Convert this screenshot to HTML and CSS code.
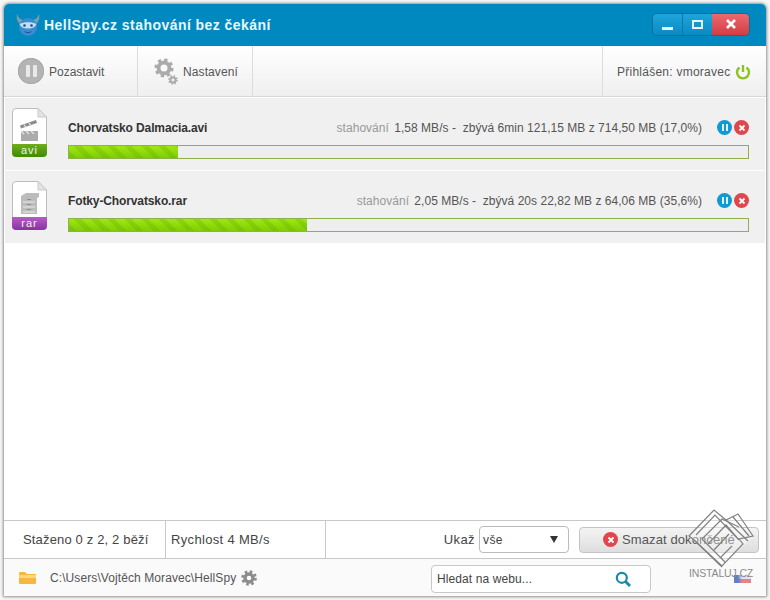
FILE: index.html
```html
<!DOCTYPE html>
<html lang="cs">
<head>
<meta charset="utf-8">
<title>HellSpy.cz stahování bez čekání</title>
<link rel="stylesheet" href="styles.css">
</head>
<body>
<div class="window">
  <header class="titlebar">
    <svg class="logo" viewBox="0 0 24 24" width="24" height="24">
      <path d="M1 1c-1 5 .5 9 4 10l3-4C5 7 2.500 5 1 1zM23 1c1 5-.5 9-4 10l-3-4c3 0 5.500-2 7-6z" fill="#7d9bb0"/>
      <circle cx="12" cy="14" r="9" fill="#3b8bd2"/>
      <path d="M3.500 11c4-2.500 13-2.500 17 0-1 3-4 4.500-8.500 4.500S4.500 14 3.500 11z" fill="#bfe0f6"/>
      <circle cx="8.500" cy="12.500" r="1.300" fill="#22507a"/>
      <circle cx="15.500" cy="12.500" r="1.300" fill="#22507a"/>
      <path d="M8 18c2 1.500 6 1.500 8 0-1 2.500-7 2.500-8 0z" fill="#174f87"/>
    </svg>
    <span class="title">HellSpy.cz stahování bez čekání</span>
    <div class="winbtns">
      <span class="wb wb-min"><i class="min-glyph"></i></span>
      <span class="wb wb-max"><i class="max-glyph"></i></span>
      <span class="wb wb-close">
        <svg viewBox="0 0 12 12" width="12" height="12"><path d="M2 2l8 8M10 2l-8 8" stroke="#fff" stroke-width="2.600"/></svg>
      </span>
    </div>
  </header>

  <nav class="toolbar">
    <div class="tool tool-pause">
      <span class="bigpause"><i></i><i></i></span>
      <span>Pozastavit</span>
    </div>
    <div class="tool tool-settings">
      <svg viewBox="0 0 24 27" width="24" height="27">
        <g fill="none" stroke="#ababab">
          <circle cx="10" cy="10" r="5.500" stroke-width="4"/>
          <circle cx="10" cy="10" r="8" stroke-width="3.200" stroke-dasharray="3.140 3.140"/>
          <circle cx="19" cy="22" r="2.500" stroke-width="2.200"/>
          <circle cx="19" cy="22" r="4" stroke-width="1.600" stroke-dasharray="1.570 1.570"/>
        </g>
      </svg>
      <span class="label-settings">Nastavení</span>
    </div>
    <div class="user">
      <span>Přihlášen: vmoravec</span>
      <svg viewBox="0 0 16 16" width="16" height="16"><path d="M4.500 3.500a6 6 0 1 0 7 0" fill="none" stroke="#8cc320" stroke-width="2.400"/><path d="M8 1v7" stroke="#8cc320" stroke-width="2.400"/></svg>
    </div>
  </nav>

  <main class="list">
    <article class="item">
      <div class="fileicon">
        <svg class="sheet" viewBox="0 0 35 37" width="35" height="37">
          <path d="M.5 37V4a3.500 3.500 0 0 1 3.500-3.500h22L34.500 9v28z" fill="#fff" stroke="#bdbdbd"/>
          <path d="M26 .5V9h8.500z" fill="#e4e4e4" stroke="#c8c8c8"/>
          <path d="M9 23h17v10H9z" fill="#ababab"/>
          <path d="M8 17.500l16-5.500 1 3-16 5.500z" fill="#8c8c8c"/>
          <path d="M12 16.500l2 3M17 14.800l2 3M9 23l3 3M14 23l3 3M19 23l3 3" stroke="#e6e6e6" stroke-width="1.200"/>
        </svg>
        <div class="ext ext-avi">avi</div>
      </div>
      <div class="body">
        <div class="meta">
          <strong class="name">Chorvatsko Dalmacia.avi</strong>
          <span class="status"><span class="state">stahování</span> 1,58 MB/s -&nbsp; zbývá 6min 121,15 MB z 714,50 MB (17,0%)</span>
          <span class="rowbtn rb-pause"><i></i><i></i></span>
          <span class="rowbtn rb-close"><svg viewBox="0 0 8 8" width="8" height="8"><path d="M1.500 1.500l5 5M6.500 1.500l-5 5" stroke="#fff" stroke-width="1.800"/></svg></span>
        </div>
        <div class="bar"><div class="fill fill-a"></div></div>
      </div>
    </article>
    <article class="item">
      <div class="fileicon">
        <svg class="sheet" viewBox="0 0 35 37" width="35" height="37">
          <path d="M.5 37V4a3.500 3.500 0 0 1 3.500-3.500h22L34.500 9v28z" fill="#fff" stroke="#bdbdbd"/>
          <path d="M26 .5V9h8.500z" fill="#e4e4e4" stroke="#c8c8c8"/>
          <path d="M9 15l5-3h13v4l-2 1v16H9z" fill="#bcbcbc"/>
          <path d="M11 21h12M11 26h12M11 31h12" stroke="#eaeaea" stroke-width="1.200"/>
          <path d="M15 18.500h4M15 23.500h4M15 28.500h4" stroke="#8e8e8e"/>
        </svg>
        <div class="ext ext-rar">rar</div>
      </div>
      <div class="body">
        <div class="meta">
          <strong class="name">Fotky-Chorvatsko.rar</strong>
          <span class="status"><span class="state">stahování</span> 2,05 MB/s -&nbsp; zbývá 20s 22,82 MB z 64,06 MB (35,6%)</span>
          <span class="rowbtn rb-pause"><i></i><i></i></span>
          <span class="rowbtn rb-close"><svg viewBox="0 0 8 8" width="8" height="8"><path d="M1.500 1.500l5 5M6.500 1.500l-5 5" stroke="#fff" stroke-width="1.800"/></svg></span>
        </div>
        <div class="bar"><div class="fill fill-b"></div></div>
      </div>
    </article>
  </main>

  <section class="statusbar">
    <div class="cell cell-count">Staženo 0 z 2, 2 běží</div>
    <div class="cell cell-speed">Rychlost 4 MB/s</div>
    <div class="controls">
      <label class="show">Ukaž</label>
      <div class="select"><span>vše</span><b class="caret"></b></div>
      <button class="clear">
        <span class="rowbtn rb-close"><svg viewBox="0 0 8 8" width="8" height="8"><path d="M1.500 1.500l5 5M6.500 1.500l-5 5" stroke="#fff" stroke-width="1.800"/></svg></span>
        Smazat dokončené
      </button>
    </div>
  </section>

  <footer class="footer">
    <svg class="folder" viewBox="0 0 17 13" width="17" height="13"><path d="M0 2a1 1 0 0 1 1-1h5l2 2h8a1 1 0 0 1 1 1v8a1 1 0 0 1-1 1H1a1 1 0 0 1-1-1z" fill="#f5b73d"/><path d="M0 4h17v3H0z" fill="#fbd67c"/></svg>
    <span class="path">C:\Users\Vojtěch Moravec\HellSpy</span>
    <svg class="pathgear" viewBox="0 0 16 16" width="16" height="16">
      <g fill="none" stroke="#8c8c8c">
        <circle cx="8" cy="8" r="4" stroke-width="3.400"/>
        <circle cx="8" cy="8" r="6.500" stroke-width="2.600" stroke-dasharray="2.550 2.550"/>
      </g>
    </svg>
    <div class="search">
      <span>Hledat na webu...</span>
      <svg viewBox="0 0 16 16" width="16" height="16"><circle cx="6.800" cy="6.800" r="5" fill="none" stroke="#1a87ad" stroke-width="2.200"/><path d="M10.500 10.500l4.500 4.500" stroke="#1a87ad" stroke-width="2.800"/></svg>
    </div>
  </footer>
</div>

<div class="watermark">
  <i class="flag"></i>
  <svg viewBox="0 0 66 62" width="66" height="62">
    <path d="M33 1l32 30-32 30L1 31z" fill="#fff" fill-opacity=".35"/>
    <g fill="none" stroke="#808080" stroke-width="1.200">
      <path d="M1 30L26 4l12 10L50 8l15 22-14 3 4 5-21 22L6 34z"/>
      <path d="M8 29L27 9l24 25M14 33L34 13l17 8M20 38L38 19l13 15M26 44l15-16M32 52l12-12"/>
      <path d="M6 34l28 27M14 33l23 23M38 14l22 21M45 11l16 19"/>
    </g>
  </svg>
  <span class="wm-text">INSTALUJ.CZ</span>
</div>
</body>
</html>
```
FILE: styles.css
```css
* { box-sizing: border-box; }
html, body { margin: 0; height: 100%; }
body {
  width: 770px;
  height: 600px;
  overflow: hidden;
  background: #f7f7f7;
  font-family: "Liberation Sans", Arial, sans-serif;
  font-size: 12px;
  color: #444;
  padding: 4px;
  position: relative;
}
.window {
  width: 762px;
  height: 592px;
  display: flex;
  flex-direction: column;
  background: #fff;
  border-radius: 5px 5px 0 0;
  box-shadow: 0 0 3px 1px #8f8f8f;
  overflow: hidden;
}

/* title bar */
.titlebar {
  height: 42px;
  flex: none;
  background: #0089bf;
  display: flex;
  align-items: center;
  padding: 0 17px 0 12px;
  color: #fff;
}
.logo { margin-right: 4px; }
.title {
  font-size: 14px;
  font-weight: bold;
  letter-spacing: 0.45px;
  color: #e8f6fc;
}
.winbtns {
  margin-left: auto;
  display: flex;
  height: 21px;
  margin-top: -2px;
  border-radius: 4px;
  overflow: hidden;
  box-shadow: 0 0 0 1px #0a6f9b;
}
.wb {
  display: flex;
  align-items: center;
  justify-content: center;
  height: 21px;
}
.wb-min { width: 30px; background: linear-gradient(#1ea4dc, #0a8ac2); border-right: 1px solid #0a78aa; }
.wb-max { width: 29px; background: linear-gradient(#1ea4dc, #0a8ac2); }
.wb-close { width: 37px; background: linear-gradient(#ea6a6f, #d33c43); }
.min-glyph { width: 11px; height: 3px; background: #e6f4fb; margin-top: 8px; }
.max-glyph { width: 11px; height: 9px; border: 2px solid #e6f4fb; }

/* toolbar */
.toolbar {
  height: 51px;
  flex: none;
  display: flex;
  align-items: stretch;
  background: linear-gradient(#ffffff, #efefef);
  border-bottom: 1px solid #d8d8d8;
  color: #555;
}
.tool {
  display: flex;
  align-items: center;
  border-right: 1px solid #dcdcdc;
}
.tool span:last-child { padding-top: 2px; }
.tool-pause { width: 134px; padding-left: 14px; gap: 5px; }
.tool-settings { width: 115px; padding-left: 16px; gap: 5px; }
.label-settings { letter-spacing: 0.1px; }
.bigpause {
  width: 26px;
  height: 26px;
  border-radius: 50%;
  background: #b4b4b4;
  display: flex;
  align-items: center;
  justify-content: center;
  gap: 3px;
  box-shadow: inset 0 0 0 1px #a8a8a8;
}
.bigpause i { width: 4px; height: 12px; background: #e9e9e9; border-radius: 1px; }
.user {
  margin-left: auto;
  width: 164px;
  display: flex;
  align-items: center;
  gap: 5px;
  padding-left: 14px;
  padding-top: 2px;
  border-left: 1px solid #dcdcdc;
  letter-spacing: 0.25px;
}

/* download list */
.list {
  flex: 1;
  min-height: 0;
  padding: 1px 1px 0;
  display: flex;
  flex-direction: column;
  gap: 1px;
}
.item {
  height: 72px;
  background: #f0f0f0;
  display: flex;
  padding: 10px 16px 0 7px;
}
.fileicon {
  width: 35px;
  height: 50px;
  margin-right: 21px;
  flex: none;
  display: flex;
  flex-direction: column;
}
.sheet { display: block; flex: none; }
.ext {
  height: 13px;
  margin-top: -1px;
  border-radius: 0 0 4px 4px;
  font-size: 11px;
  line-height: 12px;
  text-align: center;
  color: #eef6e4;
  letter-spacing: 1px;
}
.ext-avi { background: linear-gradient(#6fae19, #3f8a05); }
.ext-rar { background: linear-gradient(#b65cc8, #8a32a3); }
.body { flex: 1; min-width: 0; padding-top: 11px; }
.meta {
  display: flex;
  align-items: center;
  height: 17px;
}
.name { color: #333; font-size: 12px; letter-spacing: -0.12px; }
.status { margin-left: auto; margin-right: 15px; color: #555; white-space: pre; letter-spacing: 0.03px; }
.state { color: #999; margin-right: 2px; }
.rowbtn {
  width: 15px;
  height: 15px;
  border-radius: 50%;
  display: inline-flex;
  align-items: center;
  justify-content: center;
  flex: none;
}
.rb-pause { background: #0f9ad2; gap: 2px; margin-right: 2px; }
.rb-pause i { width: 2px; height: 7px; background: #dff2fb; }
.rb-close { background: #e0474c; }
.bar {
  margin-top: 9px;
  width: 681px;
  height: 14px;
  border: 1px solid #8fb04a;
  background: #eeeeee;
}
.fill {
  height: 100%;
  background:
    repeating-linear-gradient(45deg, rgba(80,150,0,.2) 0 5px, transparent 5px 12px),
    linear-gradient(#9ee812, #7fcc08);
}
.fill-a { width: 16%; }
.fill-b { width: 35.1%; }

/* status bar */
.statusbar {
  height: 39px;
  flex: none;
  display: flex;
  align-items: stretch;
  border-top: 1px solid #c8c8c8;
  border-bottom: 1px solid #c8c8c8;
  font-size: 13px;
  color: #444;
}
.cell { display: flex; align-items: center; border-right: 1px solid #c8c8c8; }
.cell-count { width: 162px; padding-left: 19px; letter-spacing: 0.16px; }
.cell-speed { width: 160px; padding-left: 5px; letter-spacing: 0.33px; }
.controls {
  flex: 1;
  display: flex;
  align-items: center;
  padding-right: 7px;
  letter-spacing: 0.4px;
}
.show { margin-left: auto; margin-right: 4px; }
.select {
  width: 90px;
  height: 27px;
  border: 1px solid #bbb;
  border-radius: 4px;
  background: #fff;
  display: flex;
  align-items: center;
  justify-content: space-between;
  padding: 0 10px 0 3px;
  font-size: 12px;
}
.caret {
  width: 0;
  height: 0;
  border-left: 4px solid transparent;
  border-right: 4px solid transparent;
  border-top: 7px solid #333;
}
.clear {
  margin-left: 10px;
  width: 180px;
  height: 26px;
  border: 1px solid #c4c4c4;
  border-radius: 4px;
  background: linear-gradient(#f4f4f4, #dedede);
  display: flex;
  align-items: center;
  justify-content: center;
  gap: 4px;
  font: inherit;
  letter-spacing: 0.1px;
  color: #555;
  padding: 0;
}

/* footer */
.footer {
  height: 37px;
  flex: none;
  display: flex;
  align-items: center;
  padding: 0 115px 0 15px;
  background: #fafafa;
}
.folder { margin-right: 14px; }
.path { color: #555; letter-spacing: 0.09px; margin-right: 5px; }
.search {
  margin-left: auto;
  width: 220px;
  height: 28px;
  margin-top: 2px;
  border: 1px solid #c8c8c8;
  border-radius: 4px;
  background: #fff;
  display: flex;
  align-items: center;
  justify-content: space-between;
  padding: 0 19px 0 5px;
  letter-spacing: 0.1px;
  color: #444;
}

/* watermark over the window corner */
.watermark {
  position: absolute;
  left: 688px;
  top: 506px;
  width: 70px;
  height: 80px;
  pointer-events: none;
}
.watermark svg { position: absolute; left: 0; top: 0; }
.wm-text {
  position: absolute;
  left: 1px;
  top: 61px;
  font-size: 10.5px;
  letter-spacing: -0.15px;
  color: #8a8a8a;
  white-space: nowrap;
}
.flag {
  position: absolute;
  left: 46px;
  top: 69px;
  width: 17px;
  height: 8px;
  background:
    linear-gradient(to right, #5f7fc8 0 4px, transparent 8px),
    linear-gradient(#dfe3f4 50%, #ec8087 50%);
}
```
